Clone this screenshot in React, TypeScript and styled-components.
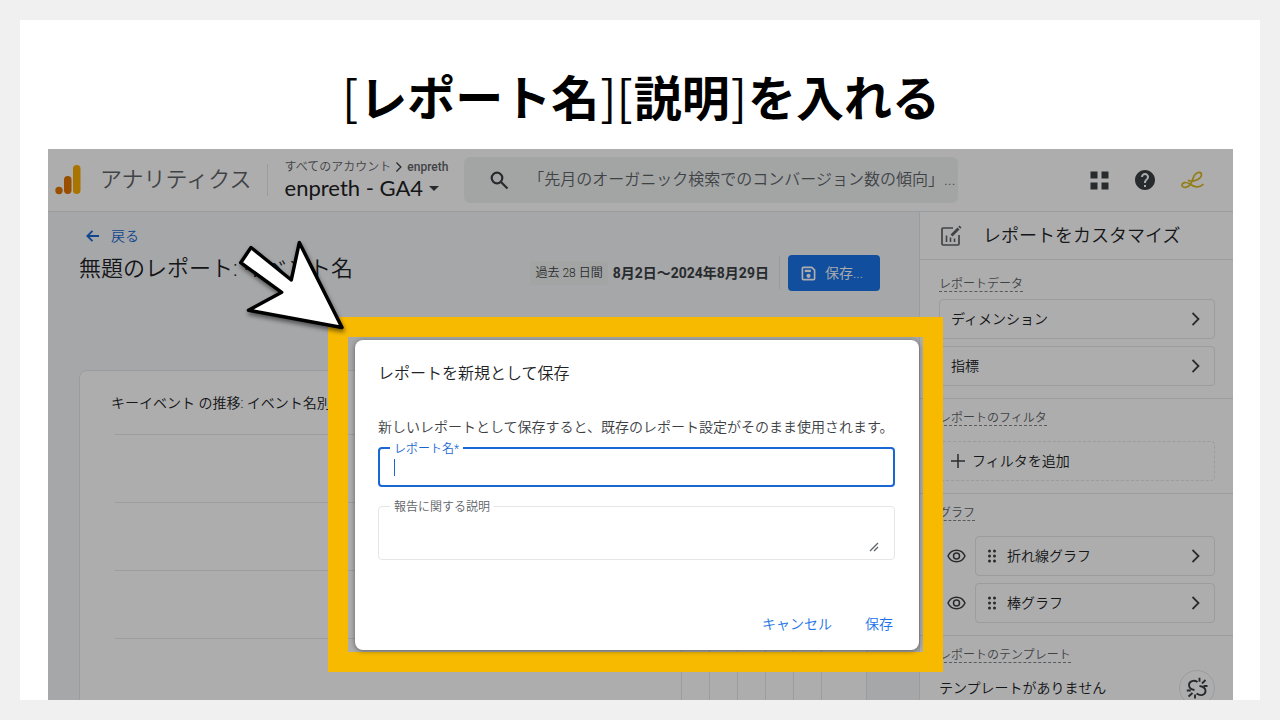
import React from "react";
import styled, { createGlobalStyle } from "styled-components";

const GlobalStyle = createGlobalStyle`
  *, *::before, *::after { box-sizing: border-box; }
  body {
    margin: 0;
    background: #f0f0f0;
    color: #202124;
    font-family: Roboto, "Noto Sans CJK JP", sans-serif;
    font-size: 14px;
    line-height: 20px;
    font-weight: 350;
  }
  h1, h2, h3, p { margin: 0; font-size: inherit; font-weight: inherit; }
  button, input, textarea { font: inherit; color: inherit; }
  button { cursor: pointer; background: none; border: 0; padding: 0; }
  a { text-decoration: none; }
  svg { display: block; flex: none; }
`;

const Page = styled.div`
  height: 100vh;
  padding: 20px;
`;
const Slide = styled.section`
  height: 100%;
  display: flex;
  flex-direction: column;
  background: #fff;
  padding: 0 27px 0 28px;
`;
const SlideTitle = styled.h1`
  padding: 40px 0 19px;
  text-align: center;
  color: #000;
  font-family: "Noto Sans CJK JP", sans-serif;
  font-size: 48px;
  line-height: 70px;
  font-weight: 700;
`;
const Bracket = styled.span`
  padding: 0 1px;
  font-weight: 400;
`;
const Screen = styled.div`
  position: relative;
  flex: 1;
  min-height: 0;
  overflow: hidden;
  display: flex;
  flex-direction: column;
  background: #f5f7fa;
`;

const Header = styled.header`
  flex: none;
  height: 63px;
  display: flex;
  align-items: center;
  background: #fff;
  border-bottom: 1px solid #e4e6e8;
`;
const Brand = styled.div`
  display: flex;
  align-items: center;
  gap: 19px;
  padding: 0 15px 0 7px;
  font-size: 22px;
  line-height: 32px;
  color: #5f6368;
  border-right: 1px solid #e4e6e8;
  white-space: nowrap;
`;
const Account = styled.button`
  margin-left: 17px;
  text-align: left;
  white-space: nowrap;
`;
const AccountPath = styled.span`
  display: flex;
  align-items: center;
  gap: 5px;
  font-size: 12px;
  line-height: 16px;
  color: #5f6368;
`;
const PathLeaf = styled.span`
  font-weight: 500;
`;
const Property = styled.span`
  display: flex;
  align-items: center;
  gap: 6px;
  font-family: Lato, sans-serif;
  font-size: 22px;
  line-height: 26px;
  font-weight: 400;
`;
const Search = styled.label`
  flex: 1;
  height: 46px;
  margin-left: 16px;
  padding-left: 26px;
  display: flex;
  align-items: center;
  gap: 19px;
  background: #f1f3f4;
  border-radius: 6px;
  color: #3c4043;
  input {
    flex: 1;
    min-width: 0;
    padding: 0;
    border: 0;
    background: none;
    font-size: 16px;
    line-height: 24px;
  }
  input::placeholder { color: #5f6368; opacity: 1; }
`;
const HeaderActions = styled.div`
  display: flex;
  align-items: center;
  gap: 24px;
  padding: 0 29px 0 132px;
  color: #3c4043;
`;

const Body = styled.div`
  flex: 1;
  min-height: 0;
  display: flex;
`;
const Main = styled.main`
  flex: 1;
  min-width: 0;
  padding: 14px 39px 0 31px;
`;
const BackLink = styled.a`
  display: inline-flex;
  align-items: center;
  gap: 12px;
  padding-left: 7px;
  color: #1967d2;
  vertical-align: top;
`;
const ReportBar = styled.div`
  display: flex;
  align-items: flex-start;
  justify-content: space-between;
  padding-top: 9px;
`;
const ReportTitle = styled.h2`
  font-size: 22px;
  line-height: 28px;
  white-space: nowrap;
`;
const Tools = styled.div`
  display: flex;
  align-items: center;
  height: 36px;
  white-space: nowrap;
`;
const RangeChip = styled.span`
  padding: 2px 5px;
  margin-right: 5px;
  background: #f1f3f4;
  border-radius: 2px;
  font-size: 12px;
  color: #3c4043;
`;
const RangeText = styled.span`
  padding-right: 10px;
  margin-right: 8px;
  border-right: 1px solid #e4e6e8;
  font-size: 14px;
  line-height: 34px;
  font-weight: 700;
  color: #3c4043;
`;
const SaveAs = styled.button`
  height: 36px;
  padding: 0 17px 0 13px;
  display: flex;
  align-items: center;
  gap: 9px;
  border-radius: 4px;
  background: #1a73e8;
  color: #fff;
`;
const Card = styled.section`
  margin: 79px 13px 0 0;
  display: flex;
  background: #fff;
  border: 1px solid #e4e6e8;
  border-radius: 8px;
`;
const LineChart = styled.div`
  flex: 1;
  padding: 22px 60px 0 31px;
`;
const ChartTitle = styled.h3`
  padding-bottom: 21px;
  line-height: 20px;
  white-space: nowrap;
`;
const GridRow = styled.div`
  height: 68px;
  margin-left: 4px;
  border-top: 1px solid #e4e6e8;
`;
const BarChart = styled.div`
  width: 185px;
  display: flex;
`;
const GridColumn = styled.div`
  width: 28px;
  border-left: 1px solid #e4e6e8;
`;

const Panel = styled.aside`
  flex: none;
  width: 314px;
  background: #fff;
  border-left: 1px solid #e4e6e8;
`;
const PanelHeader = styled.div`
  height: 48px;
  display: flex;
  align-items: center;
  gap: 21px;
  padding-left: 20px;
  border-bottom: 1px solid #e4e6e8;
  font-size: 18px;
  white-space: nowrap;
`;
const Section = styled.section<{ $lead?: boolean }>`
  padding: ${(p) => (p.$lead ? "15px 18px 12px 19px" : "10px 18px 12px 19px")};
  border-bottom: 1px solid #e4e6e8;
`;
const SectionLabel = styled.h3<{ $tight?: boolean }>`
  width: fit-content;
  margin-bottom: ${(p) => (p.$tight ? "7px" : "15px")};
  padding-top: 2px;
  border-bottom: 1px dashed #80868b;
  font-size: 12px;
  line-height: 14px;
  color: #5f6368;
`;
const List = styled.div`
  display: grid;
  gap: 7px;
`;
const Item = styled.div`
  display: flex;
  align-items: center;
  gap: 9px;
`;
const RowButton = styled.button<{ $dashed?: boolean }>`
  flex: 1;
  height: 40px;
  padding: 0 14px 0 11px;
  display: flex;
  align-items: center;
  gap: ${(p) => (p.$dashed ? "7px" : "10px")};
  border: 1px ${(p) => (p.$dashed ? "dashed" : "solid")} #e4e6e8;
  border-radius: 4px;
`;
const RowText = styled.span`
  flex: 1;
  text-align: left;
`;
const EyeButton = styled.button`
  margin-left: 8px;
  color: #3c4043;
`;
const TemplateRow = styled.div`
  display: flex;
  align-items: center;
  justify-content: space-between;
`;
const RoundButton = styled.button`
  width: 36px;
  height: 36px;
  display: grid;
  place-items: center;
  border: 1px solid #e4e6e8;
  border-radius: 50%;
  color: #3c4043;
`;

const Backdrop = styled.div`
  position: absolute;
  inset: 0;
  background: rgba(0, 0, 0, 0.32);
`;
const Highlight = styled.div`
  position: absolute;
  top: 168px;
  left: 280px;
  right: 290px;
  border: 20px solid #f7ba00;
  padding: 3px 4px 2px 7px;
`;
const Dialog = styled.form`
  padding: 24px 24px 16px 23px;
  background: #fff;
  border-radius: 8px;
  box-shadow: 0 1px 5px rgba(0, 0, 0, 0.45);
`;
const DialogTitle = styled.h2`
  font-size: 16px;
  line-height: 20px;
`;
const DialogText = styled.p`
  padding: 33px 0 10px;
  color: #3c4043;
  white-space: nowrap;
`;
const Field = styled.div<{ $active?: boolean }>`
  position: relative;
  display: flex;
  margin-bottom: 19px;
  border: ${(p) => (p.$active ? "2px solid #1967d2" : "1px solid #e4e6e8")};
  border-radius: 4px;
  color: ${(p) => (p.$active ? "#1967d2" : "#5f6368")};
  label {
    position: absolute;
    top: -8px;
    left: ${(p) => (p.$active ? "10px" : "11px")};
    padding: 0 4px;
    background: #fff;
    font-size: 12px;
    line-height: 16px;
  }
  input, textarea {
    width: 100%;
    padding: 0 14px;
    border: 0;
    outline: 0;
    background: none;
    resize: none;
  }
  input { height: 36px; }
  textarea { height: 52px; }
`;
const Caret = styled.span`
  position: absolute;
  left: 14px;
  top: 10px;
  width: 1px;
  height: 17px;
  background: #1967d2;
`;
const Grip = styled.svg`
  position: absolute;
  right: 15px;
  bottom: 7px;
`;
const DialogActions = styled.div`
  display: flex;
  justify-content: flex-end;
  gap: 33px;
  padding: 35px 2px 0 0;
  color: #1a73e8;
`;
const Pointer = styled.svg`
  position: absolute;
  left: 188px;
  top: 87px;
  filter: drop-shadow(1px 3px 2px rgba(0, 0, 0, 0.5));
`;

const AnalyticsLogo = () => (
  <svg width="26" height="30" viewBox="0 0 26 30" aria-hidden="true">
    <rect x="18" y="0" width="7.500" height="29" rx="3.700" fill="#f9ab00" />
    <rect x="9" y="11" width="7.500" height="18" rx="3.700" fill="#e37400" />
    <circle cx="4" cy="25.500" r="3.700" fill="#e37400" />
  </svg>
);
const SearchIcon = () => (
  <svg width="19" height="19" viewBox="0 0 19 19" fill="none" stroke="currentColor" strokeWidth="2.2" aria-hidden="true">
    <circle cx="7" cy="7" r="5.3" />
    <path d="M11 11l6.5 6.5" />
  </svg>
);
const AppsIcon = () => (
  <svg width="19" height="19" viewBox="0 0 19 19" fill="currentColor" aria-hidden="true">
    <path d="M.5.5h7v7h-7zM11.500.5h7v7h-7zM.5 11.500h7v7h-7zM11.500 11.500h7v7h-7z" />
  </svg>
);
const HelpIcon = () => (
  <svg width="24" height="24" viewBox="0 0 24 24" fill="currentColor" aria-hidden="true">
    <path d="M12 2C6.48 2 2 6.48 2 12s4.48 10 10 10 10-4.48 10-10S17.52 2 12 2zm1 17h-2v-2h2v2zm2.07-7.75l-.9.92C13.45 12.9 13 13.5 13 15h-2v-.5c0-1.1.45-2.1 1.17-2.83l1.24-1.26c.37-.36.59-.86.59-1.41 0-1.1-.9-2-2-2s-2 .9-2 2H8c0-2.21 1.79-4 4-4s4 1.79 4 4c0 .88-.36 1.68-.93 2.25z" />
  </svg>
);
const ProfileMark = () => (
  <svg width="23" height="18" viewBox="0 0 23 18" fill="none" stroke="#d9b81f" strokeWidth="1.700" strokeLinecap="round" strokeLinejoin="round" aria-hidden="true">
    <path d="M7.500 9.500C12 11.500 20.500 8 20.500 3.500C20.500.8 16.500.3 14 3.500C11.500 6.500 11.500 13 7 15.500C4 17.200.8 16.200 1 14C1.300 11 6 10.800 9 13C12.500 15.800 18 17.500 22 13.500" />
  </svg>
);
const BackIcon = () => (
  <svg width="13" height="12" viewBox="0 0 13 12" fill="none" stroke="currentColor" strokeWidth="1.800" aria-hidden="true">
    <path d="M13 6H1.500M6.500 .8L1.300 6l5.200 5.200" />
  </svg>
);
const SaveIcon = () => (
  <svg width="15" height="15" viewBox="0 0 16 16" aria-hidden="true">
    <path d="M2.500 1.500h9l3 3v9a1 1 0 0 1-1 1h-11a1 1 0 0 1-1-1v-11a1 1 0 0 1 1-1z" fill="none" stroke="currentColor" strokeWidth="1.800" />
    <path d="M4 4h6.500v2.500H4z" fill="currentColor" />
    <circle cx="8" cy="10.500" r="2.200" fill="currentColor" />
  </svg>
);
const CustomizeIcon = () => (
  <svg width="22" height="22" viewBox="0 0 22 22" fill="none" stroke="#5f6368" aria-hidden="true">
    <path d="M13 3H3.200Q2 3 2 4.200v14.600Q2 20 3.200 20h14.600q1.200 0 1.200-1.200V10" strokeWidth="1.700" />
    <path d="M6.500 10.500v6.500M10.500 12.500v4.500M14.500 13.500v3.500" strokeWidth="1.600" />
    <path d="M11.500 10.500L18.500 3.500" strokeWidth="2.800" />
    <path d="M19.300 2.700l1.200-1.200" strokeWidth="2.800" />
  </svg>
);
const Chevron = ({ size = 16 }: { size?: number }) => (
  <svg width={size / 2} height={size} viewBox="0 0 8 16" fill="none" stroke="#3c4043" strokeWidth="1.800" aria-hidden="true">
    <path d="M.5 2l6 6-6 6" />
  </svg>
);
const PlusIcon = () => (
  <svg width="14" height="14" viewBox="0 0 14 14" fill="none" stroke="#3c4043" strokeWidth="1.500" aria-hidden="true">
    <path d="M7 0v14M0 7h14" />
  </svg>
);
const EyeIcon = () => (
  <svg width="19" height="14" viewBox="0 0 19 14" fill="none" stroke="currentColor" strokeWidth="1.500" aria-hidden="true">
    <path d="M1 7C4.500-.7 14.500-.7 18 7C14.500 14.700 4.500 14.700 1 7z" />
    <circle cx="9.500" cy="7" r="3" />
  </svg>
);
const DragDots = () => (
  <svg width="10" height="14" viewBox="0 0 10 14" fill="#3c4043" aria-hidden="true">
    {[2, 7, 12].map((y) => (
      <React.Fragment key={y}>
        <circle cx="2.500" cy={y} r="1.500" />
        <circle cx="7.500" cy={y} r="1.500" />
      </React.Fragment>
    ))}
  </svg>
);
const UnlinkIcon = () => (
  <svg width="22" height="22" viewBox="0 0 22 22" fill="none" stroke="currentColor" strokeWidth="1.900" aria-hidden="true">
    <path d="M11.500 5C8 2.500 3 4 3 8C3 11.500 5.500 12.500 8.500 13M13.500 9C17 9.500 19.500 11 19.500 14C19.500 18 14.500 19.500 10.500 16.500" />
    <path d="M13.500 .8v4M16 6.500l3.500-3.500M17.500 9H21.500M.8 13.500h4M2.500 19.500L6.500 16M9 17.500v4" />
  </svg>
);

const graphs = ["折れ線グラフ", "棒グラフ"];

export default function App() {
  return (
    <Page>
      <GlobalStyle />
      <Slide>
        <SlideTitle>
          <Bracket>[</Bracket>レポート名<Bracket>][</Bracket>説明<Bracket>]</Bracket>を入れる
        </SlideTitle>
        <Screen>
          <Header>
            <Brand>
              <AnalyticsLogo />
              アナリティクス
            </Brand>
            <Account type="button">
              <AccountPath>
                すべてのアカウント
                <Chevron size={12} />
                <PathLeaf>enpreth</PathLeaf>
              </AccountPath>
              <Property>
                enpreth - GA4
                <svg width="10" height="5" viewBox="0 0 10 5" aria-hidden="true">
                  <path d="M0 0h10L5 5z" fill="#3c4043" />
                </svg>
              </Property>
            </Account>
            <Search>
              <SearchIcon />
              <input
                type="text"
                aria-label="検索"
                placeholder="「先月のオーガニック検索でのコンバージョン数の傾向」..."
              />
            </Search>
            <HeaderActions>
              <button type="button" aria-label="アプリ"><AppsIcon /></button>
              <button type="button" aria-label="ヘルプ"><HelpIcon /></button>
              <button type="button" aria-label="アカウント"><ProfileMark /></button>
            </HeaderActions>
          </Header>

          <Body>
            <Main>
              <BackLink href="#reports">
                <BackIcon />
                戻る
              </BackLink>
              <ReportBar>
                <ReportTitle>無題のレポート: イベント名</ReportTitle>
                <Tools>
                  <RangeChip>過去 28 日間</RangeChip>
                  <RangeText>8月2日～2024年8月29日</RangeText>
                  <SaveAs type="button">
                    <SaveIcon />
                    保存...
                  </SaveAs>
                </Tools>
              </ReportBar>
              <Card>
                <LineChart>
                  <ChartTitle>キーイベント の推移: イベント名別</ChartTitle>
                  {[0, 1, 2, 3, 4].map((n) => <GridRow key={n} />)}
                </LineChart>
                <BarChart>
                  {[0, 1, 2, 3, 4, 5].map((n) => <GridColumn key={n} />)}
                </BarChart>
              </Card>
            </Main>

            <Panel>
              <PanelHeader>
                <CustomizeIcon />
                <h2>レポートをカスタマイズ</h2>
              </PanelHeader>
              <Section $lead>
                <SectionLabel $tight>レポートデータ</SectionLabel>
                <List>
                  {["ディメンション", "指標"].map((name) => (
                    <RowButton key={name} type="button">
                      <RowText>{name}</RowText>
                      <Chevron />
                    </RowButton>
                  ))}
                </List>
              </Section>
              <Section>
                <SectionLabel>レポートのフィルタ</SectionLabel>
                <List>
                  <RowButton type="button" $dashed>
                    <PlusIcon />
                    <RowText>フィルタを追加</RowText>
                  </RowButton>
                </List>
              </Section>
              <Section>
                <SectionLabel>グラフ</SectionLabel>
                <List>
                  {graphs.map((name) => (
                    <Item key={name}>
                      <EyeButton type="button" aria-label={`${name}の表示`}><EyeIcon /></EyeButton>
                      <RowButton type="button">
                        <DragDots />
                        <RowText>{name}</RowText>
                        <Chevron />
                      </RowButton>
                    </Item>
                  ))}
                </List>
              </Section>
              <Section>
                <SectionLabel $tight>レポートのテンプレート</SectionLabel>
                <TemplateRow>
                  テンプレートがありません
                  <RoundButton type="button" aria-label="リンクを解除"><UnlinkIcon /></RoundButton>
                </TemplateRow>
              </Section>
            </Panel>
          </Body>

          <Backdrop />
          <Highlight>
            <Dialog role="dialog" aria-labelledby="dialog-title">
              <DialogTitle id="dialog-title">レポートを新規として保存</DialogTitle>
              <DialogText>
                新しいレポートとして保存すると、既存のレポート設定がそのまま使用されます。
              </DialogText>
              <Field $active>
                <label htmlFor="report-name">レポート名*</label>
                <input id="report-name" type="text" />
                <Caret />
              </Field>
              <Field>
                <label htmlFor="report-note">報告に関する説明</label>
                <textarea id="report-note" />
                <Grip width="10" height="10" viewBox="0 0 10 10" fill="none" stroke="#5f6368" strokeWidth="1.300" aria-hidden="true">
                  <path d="M1 9L9 1M5 9l4-4" />
                </Grip>
              </Field>
              <DialogActions>
                <button type="button">キャンセル</button>
                <button type="button">保存</button>
              </DialogActions>
            </Dialog>
          </Highlight>
          <Pointer width="112" height="100" viewBox="236 236 112 100" aria-hidden="true">
            <path
              d="M251 247.500L240.700 262.700L281.700 292.300L248.500 310.300L342 327.500L299.300 242.500L291.300 280z"
              fill="#fff"
              stroke="#000"
              strokeWidth="3.500"
              strokeLinejoin="round"
            />
          </Pointer>
        </Screen>
      </Slide>
    </Page>
  );
}
